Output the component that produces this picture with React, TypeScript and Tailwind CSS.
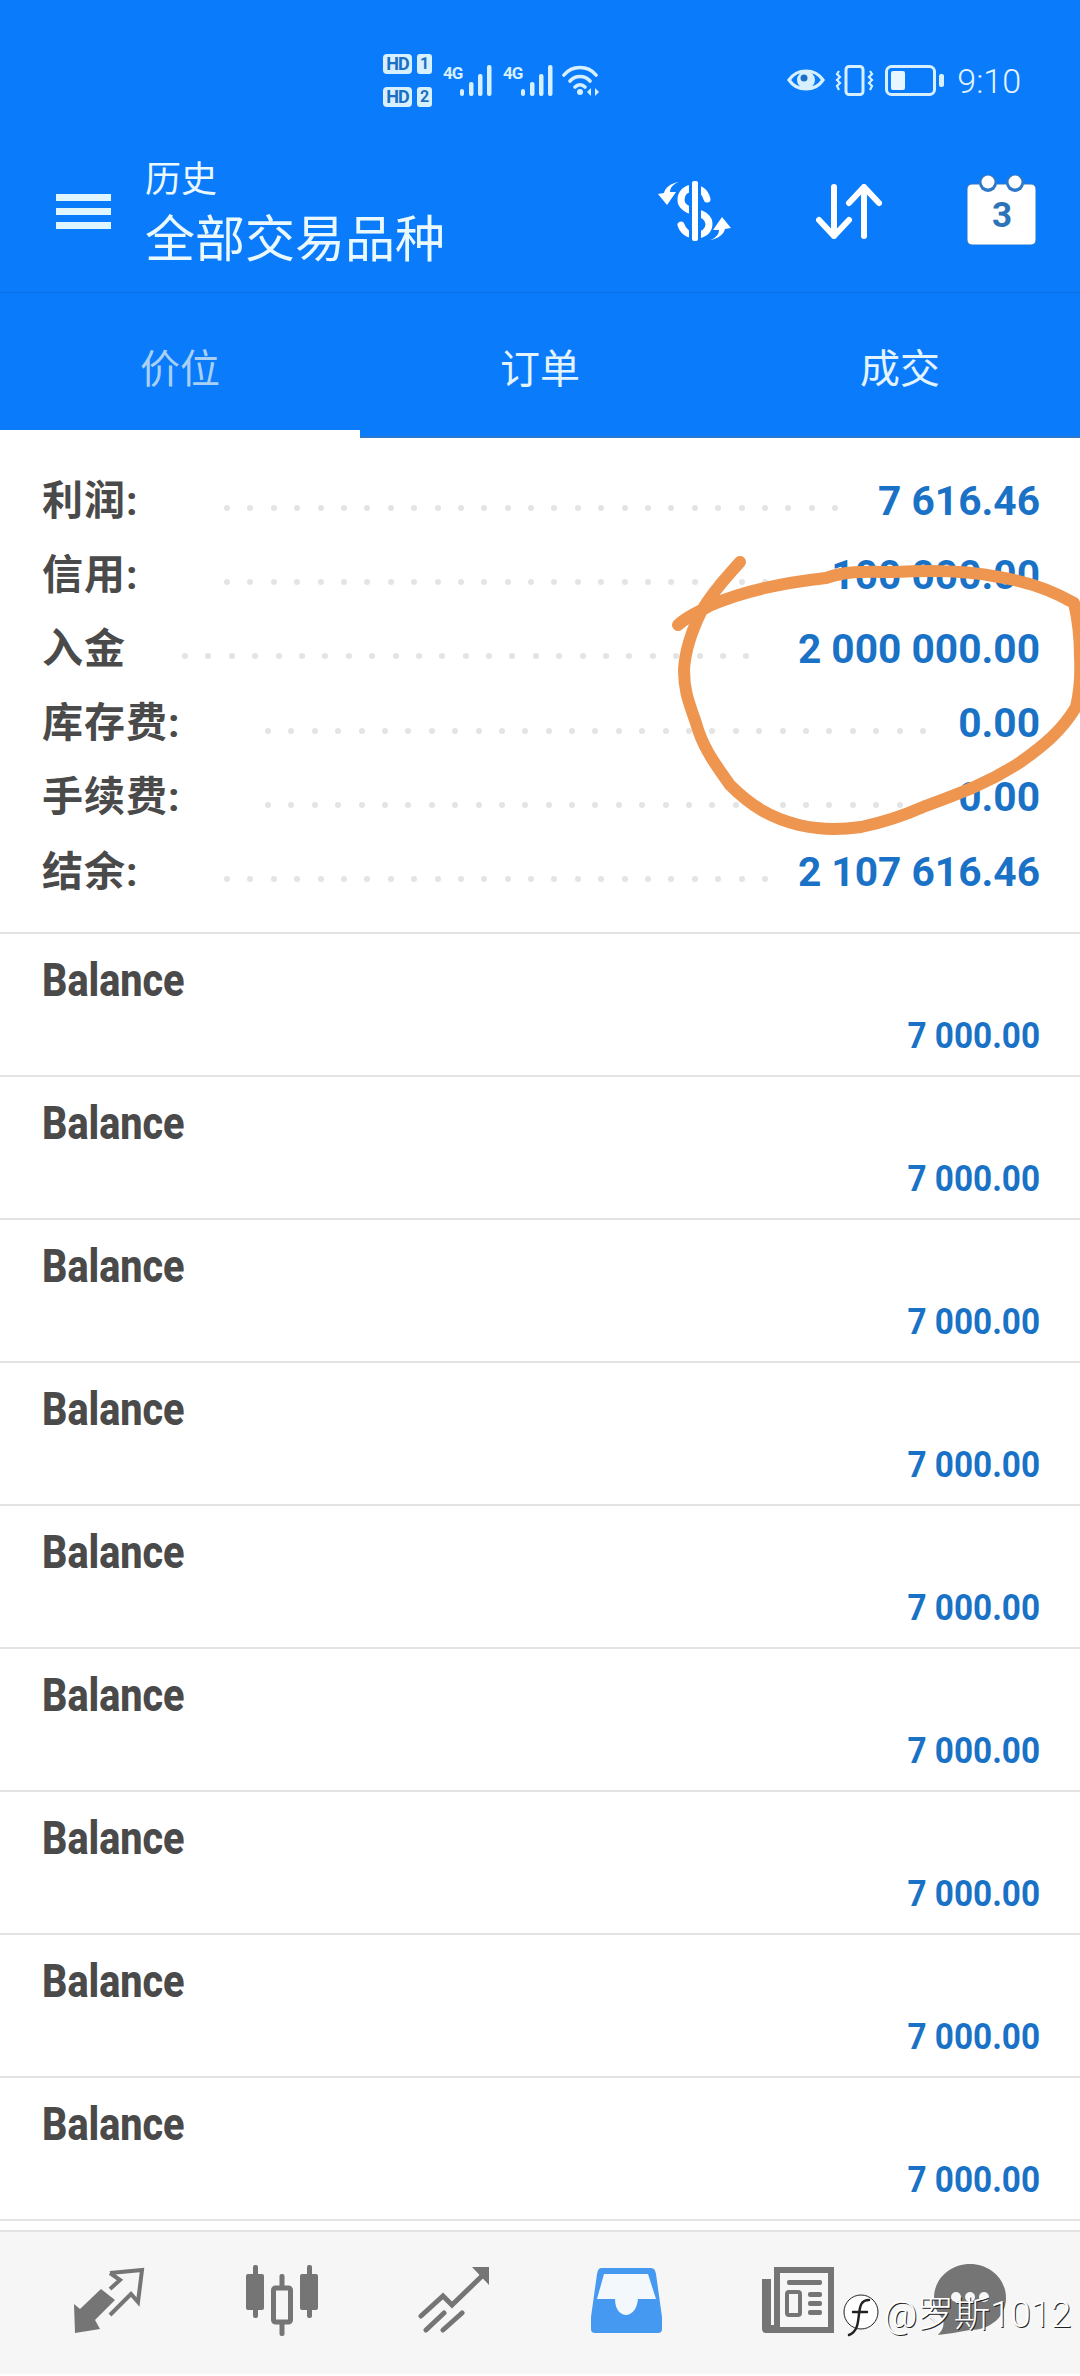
import clsx from "clsx";

const FONT = "font-['Roboto','Noto_Sans_CJK_SC',sans-serif]";

const STATS = [
  { label: "利润:", labelWidth: "w-[182px]", dots: 27, value: "7 616.46" },
  { label: "信用:", labelWidth: "w-[182px]", dots: 24, value: "100 000.00" },
  { label: "入金", labelWidth: "w-[140px]", dots: 25, value: "2 000 000.00" },
  { label: "库存费:", labelWidth: "w-[223px]", dots: 29, value: "0.00" },
  { label: "手续费:", labelWidth: "w-[223px]", dots: 29, value: "0.00" },
  { label: "结余:", labelWidth: "w-[182px]", dots: 24, value: "2 107 616.46" },
];

const BALANCE_ROWS = Array.from({ length: 9 }, (_, i) => i);

function Signal() {
  return (
    <svg width="32" height="31" viewBox="0 0 32 31" fill="#d6f0ff">
      <rect x="0" y="24" width="4" height="7" rx="2" />
      <rect x="9" y="17" width="4.5" height="14" rx="2" />
      <rect x="18" y="9" width="4.5" height="22" rx="2" />
      <rect x="27" y="0" width="4.5" height="31" rx="2" />
    </svg>
  );
}

function HdRow({ n }: { n: string }) {
  return (
    <div className="flex items-center gap-[5px]">
      <div className="flex h-[20px] w-[29px] items-center justify-center rounded-[4px] bg-[#d6f0ff] text-[18px] font-bold leading-none tracking-[-1px] text-[#1c6fc4]">
        HD
      </div>
      <div className="flex h-[20px] w-[15px] items-center justify-center rounded-[3px] bg-[#d6f0ff] text-[16px] font-bold leading-none text-[#1c6fc4]">
        {n}
      </div>
    </div>
  );
}

function StatusBar() {
  return (
    <div className="flex h-[130px] items-center justify-between pl-[383px] pr-[59px] pt-[30px]">
      <div className="flex items-center">
        <div className="flex flex-col gap-[13px]">
          <HdRow n="1" />
          <HdRow n="2" />
        </div>
        <div className="ml-[11px] flex w-[60px] items-start">
          <span className="mt-[-2px] w-[17px] text-[17px] font-bold leading-[20px] tracking-[-1px] text-[#d6f0ff]">4G</span>
          <Signal />
        </div>
        <div className="flex w-[59px] items-start">
          <span className="mt-[-2px] w-[18px] text-[17px] font-bold leading-[20px] tracking-[-1px] text-[#d6f0ff]">4G</span>
          <Signal />
        </div>
        <svg width="39" height="31" viewBox="0 0 39 31" fill="none" stroke="#d6f0ff" strokeWidth="3.6" strokeLinecap="round">
          <path d="M2 10 C10 0 26 0 34 10" />
          <path d="M8 16 C13 10 23 10 28 16" />
          <path d="M13 22 C16 19 20 19 23 22" />
          <circle cx="18" cy="27" r="3" fill="#d6f0ff" stroke="none" />
          <path d="M29 23 L25 27 L29 31Z M33 23 L37 27 L33 31Z" fill="#d6f0ff" stroke="none" />
        </svg>
      </div>
      <div className="flex items-center">
        <svg width="38" height="26" viewBox="0 0 38 26">
          <path d="M2 13 C10 1 28 1 36 13 C28 25 10 25 2 13Z" fill="none" stroke="#d6f0ff" strokeWidth="3.2" />
          <circle cx="19" cy="13" r="9" fill="#d6f0ff" />
          <circle cx="17" cy="11" r="3.5" fill="#1c6fc4" />
        </svg>
        <svg className="ml-[10px]" width="39" height="31" viewBox="0 0 39 31" fill="none" stroke="#d6f0ff">
          <rect x="11" y="1.5" width="17" height="28" rx="3" strokeWidth="3" />
          <path d="M4 6 L2 9 L5 12 L2 15 L5 18 L2 21 L4 25" strokeWidth="2.2" />
          <path d="M35 6 L37 9 L34 12 L37 15 L34 18 L37 21 L35 25" strokeWidth="2.2" />
        </svg>
        <svg className="ml-[11px]" width="60" height="31" viewBox="0 0 60 31">
          <rect x="1.5" y="1.5" width="48" height="28" rx="5" fill="none" stroke="#d6f0ff" strokeWidth="3" />
          <rect x="6" y="6" width="14" height="19" rx="2" fill="#e8f6ff" />
          <rect x="54" y="9" width="5" height="13" rx="2" fill="#d6f0ff" />
        </svg>
        <span className="ml-[12px] mt-[1px] text-[34px] font-light leading-none text-[#e3f4ff]">9:10</span>
      </div>
    </div>
  );
}

function DollarIcon() {
  return (
    <svg width="73" height="60" viewBox="0 0 73 60">
      <path d="M49 18 C47 10 41 7 36 7 C28 7 23 12 23 19 C23 26 30 29 37 31 C45 33 51 36 51 43 C51 50 45 54 37 54 C30 54 25 50 23 44" fill="none" stroke="#fff" strokeWidth="7" strokeLinecap="round" />
      <rect x="31" y="0" width="12" height="60" fill="#0a7bfb" />
      <rect x="34" y="0" width="6" height="60" rx="2" fill="#fff" />
      <path d="M21 1 C15 3 12 7 12 11 L18 11 L9 24 L0 13 L6 12 C7 7 13 2 21 1Z" fill="#fff" />
      <path d="M21 1 C15 3 12 7 12 11 L18 11 L9 24 L0 13 L6 12 C7 7 13 2 21 1Z" fill="#fff" transform="rotate(180 36.5 30)" />
    </svg>
  );
}

function ArrowsIcon() {
  return (
    <svg width="66" height="55" viewBox="0 0 66 55" fill="none" stroke="#fff" strokeWidth="6" strokeLinecap="round" strokeLinejoin="round">
      <path d="M18 3 V52 M3 36 L18 52 L33 36" />
      <path d="M48 52 V3 M33 19 L48 3 L63 19" />
    </svg>
  );
}

function CalendarIcon() {
  return (
    <svg width="69" height="70" viewBox="0 0 69 70" className="-mt-[2px]">
      <rect x="0" y="9" width="69" height="61" rx="5" fill="#fff" stroke="#2f78c8" strokeWidth="1" />
      <circle cx="21" cy="8" r="9" fill="#2f78c8" />
      <circle cx="48" cy="8" r="9" fill="#2f78c8" />
      <circle cx="21" cy="7" r="6.5" fill="#fff" />
      <circle cx="48" cy="7" r="6.5" fill="#fff" />
      <text x="35" y="52" textAnchor="middle" fontFamily="Roboto" fontSize="35" fontWeight="700" fill="#2c73b8">3</text>
    </svg>
  );
}

function Toolbar() {
  return (
    <div className="flex h-[163px] items-center border-b border-[#0b6de0] pl-[56px] pr-[44px]">
      <div className="flex w-[55px] flex-col gap-[7px]">
        <div className="h-[7px] bg-[#dff5ff]" />
        <div className="h-[7px] bg-[#dff5ff]" />
        <div className="h-[7px] bg-[#dff5ff]" />
      </div>
      <div className="ml-[34px] flex flex-1 flex-col self-start pt-[24px] text-[#eaf8ff]">
        <span className="text-[36px] leading-[52px]">历史</span>
        <span className="text-[50px] leading-[68px]">全部交易品种</span>
      </div>
      <div className="flex items-center gap-[85px]">
        <DollarIcon />
        <ArrowsIcon />
        <CalendarIcon />
      </div>
    </div>
  );
}

function Tabs() {
  return (
    <div className="grid h-[145px] grid-cols-3 border-b-2 border-[#2a78d0] text-[40px] leading-none">
      <div className="-mb-[2px] flex items-center justify-center border-b-[8px] border-white pt-[17px] text-[#a8d0f5]">价位</div>
      <div className="flex items-center justify-center pt-[11px] text-[#e3f4ff]">订单</div>
      <div className="flex items-center justify-center pt-[11px] text-[#e3f4ff]">成交</div>
    </div>
  );
}

function StatRow({ label, labelWidth, dots, value }: (typeof STATS)[number]) {
  return (
    <div className="flex h-[74.2px] items-center pl-[42px] pr-[40px]">
      <span className={clsx("shrink-0 pt-[2px] text-[41px] font-bold leading-none tracking-[1px] text-[#4a4a4a]", labelWidth)}>{label}</span>
      <div className="mt-[16px] flex gap-[17.4px]">
        {Array.from({ length: dots }, (_, i) => (
          <div key={i} className="h-[6px] w-[6px] rounded-full bg-[#e4e4e4]" />
        ))}
      </div>
      <span className="ml-auto pt-[2px] text-[40.7px] font-bold leading-none text-[#1a72c6]">{value}</span>
    </div>
  );
}

function BalanceRow() {
  return (
    <div className="box-border h-[143px] border-b-2 border-[#e3e3e3] pl-[42px] pr-[40px] pt-[21px]">
      <div className="origin-left scale-x-[0.86] text-[46px] font-extrabold leading-[50px] text-[#4a4a4a]">Balance</div>
      <div className="mt-[6px] origin-right scale-x-90 text-right text-[37px] font-bold leading-[50px] text-[#1a72c6]">7 000.00</div>
    </div>
  );
}

function BottomBar() {
  const gray = "#757575";
  return (
    <div className="flex h-[144px] items-start gap-[99.5px] border-t-2 border-[#e3e3e3] bg-[#f6f6f6] pl-[73px] pt-[35px]">
      <svg width="72" height="66" viewBox="0 0 72 66" fill="none" stroke={gray} strokeWidth="4">
        <path d="M37 6 L69 3 L65 35 L58 27 L37 48" />
        <path d="M37 6 L47 13 L37 22" />
        <path d="M28 22 L42 33 L22 53 L27 62 L2 66 L1 37 L7 42Z" fill={gray} stroke="none" />
      </svg>
      <svg width="74" height="72" viewBox="0 0 74 72" fill={gray} className="-mt-[3px]">
        <rect x="8" y="1" width="5" height="53" rx="2" />
        <rect x="1" y="10" width="18" height="36" rx="2" />
        <rect x="62" y="1" width="5" height="53" rx="2" />
        <rect x="55" y="10" width="18" height="36" rx="2" />
        <rect x="34.5" y="10" width="5" height="62" rx="2" />
        <rect x="28.5" y="24" width="17" height="34" rx="2" fill="#f6f6f6" stroke={gray} strokeWidth="5" />
      </svg>
      <svg width="72" height="66" viewBox="0 0 72 66" fill="none" stroke={gray} strokeWidth="5" strokeLinecap="round">
        <path d="M3 49 L25 29 L34 38 L64 9" />
        <path d="M26 46 L8 63 M44 46 L25 63" />
        <path d="M54 0 H71 V18Z" fill={gray} stroke="none" />
      </svg>
      <svg width="73" height="66" viewBox="0 0 73 66">
        <path d="M11 1 H61 Q65 1 66 7 L72 50 V62 Q72 66 68 66 H5 Q1 66 1 62 V50 L7 7 Q8 1 11 1Z" fill="#4599f0" />
        <path d="M14 7 H58 L66 32 H48 C47 43 41 48 36 48 C31 48 25 43 25 32 H7Z" fill="#f3f8fd" />
      </svg>
      <svg width="72" height="66" viewBox="0 0 72 66" fill={gray}>
        <path d="M12 0 H72 V66 H4 Q0 66 0 62 V12 H9 V58 H12Z M18 6 V60 H66 V6Z" fillRule="evenodd" />
        <rect x="25" y="13" width="35" height="5" rx="2" />
        <rect x="25" y="25" width="13" height="23" rx="2" fill="none" stroke={gray} strokeWidth="4" />
        <rect x="46" y="25" width="14" height="5" rx="2" />
        <rect x="46" y="34" width="14" height="5" rx="2" />
        <rect x="46" y="43" width="14" height="5" rx="2" />
      </svg>
      <svg width="72" height="71" viewBox="0 0 72 71" fill={gray} className="-mt-[3px]">
        <path d="M36 0 C56 0 72 15 72 34 C72 53 56 66 36 66 C24 68 14 70 4 71 C10 65 10 60 9 55 C3 49 0 42 0 34 C0 15 16 0 36 0Z" />
        <circle cx="22" cy="33" r="5" fill="#f6f6f6" />
        <circle cx="36" cy="33" r="5" fill="#f6f6f6" />
        <circle cx="50" cy="33" r="5" fill="#f6f6f6" />
      </svg>
    </div>
  );
}

export default function App() {
  return (
    <div className={clsx("relative h-[2376px] w-[1080px] overflow-hidden bg-white", FONT)}>
      <div className="bg-[#0a7bfb]">
        <StatusBar />
        <Toolbar />
        <Tabs />
      </div>

      <div className="box-border h-[494px] pt-[25px]">
        {STATS.map((s) => (
          <StatRow key={s.label} {...s} />
        ))}
      </div>

      <div className="border-t-2 border-[#e3e3e3]">
        {BALANCE_ROWS.map((i) => (
          <BalanceRow key={i} />
        ))}
      </div>
      <div className="h-[9px]" />

      <BottomBar />

      {/* hand drawn circle over the amounts */}
      <svg className="absolute left-0 top-0" width="1080" height="2376" fill="none">
        <path
          d="M678 625 C690 614 700 612 709 606 C745 590 790 582 826 578 C850 570 870 572 895 572 C930 570 965 570 999 577 C1030 582 1055 592 1074 603 C1078 620 1080 640 1080 657 C1081 675 1080 690 1076 707 C1062 730 1045 745 1019 763 C985 785 955 795 923 807 C905 815 885 822 861 827 C840 830 820 830 799 825 C770 818 750 805 730 785 C712 760 702 745 696 723 C688 700 684 690 684 670 C685 650 692 630 702 610 C714 590 726 578 740 562"
          stroke="#ee9550"
          strokeWidth="12"
          strokeLinecap="round"
          strokeLinejoin="round"
        />
      </svg>

      {/* watermark */}
      <div className="absolute left-[843px] top-[2292px] flex items-center">
        <svg width="38" height="46" viewBox="0 0 38 46">
          <circle cx="18" cy="20" r="17" fill="#fff" stroke="#222" strokeWidth="1" />
          <path d="M26 8 C18 8 17 14 16 22 C15 32 14 40 6 43 M10 20 H24" fill="none" stroke="#222" strokeWidth="2.5" strokeLinecap="round" />
        </svg>
        <span className="ml-[3px] text-[36.5px] font-light leading-none text-white [text-shadow:1px_1px_0_#222]">@罗斯1012</span>
      </div>
    </div>
  );
}
